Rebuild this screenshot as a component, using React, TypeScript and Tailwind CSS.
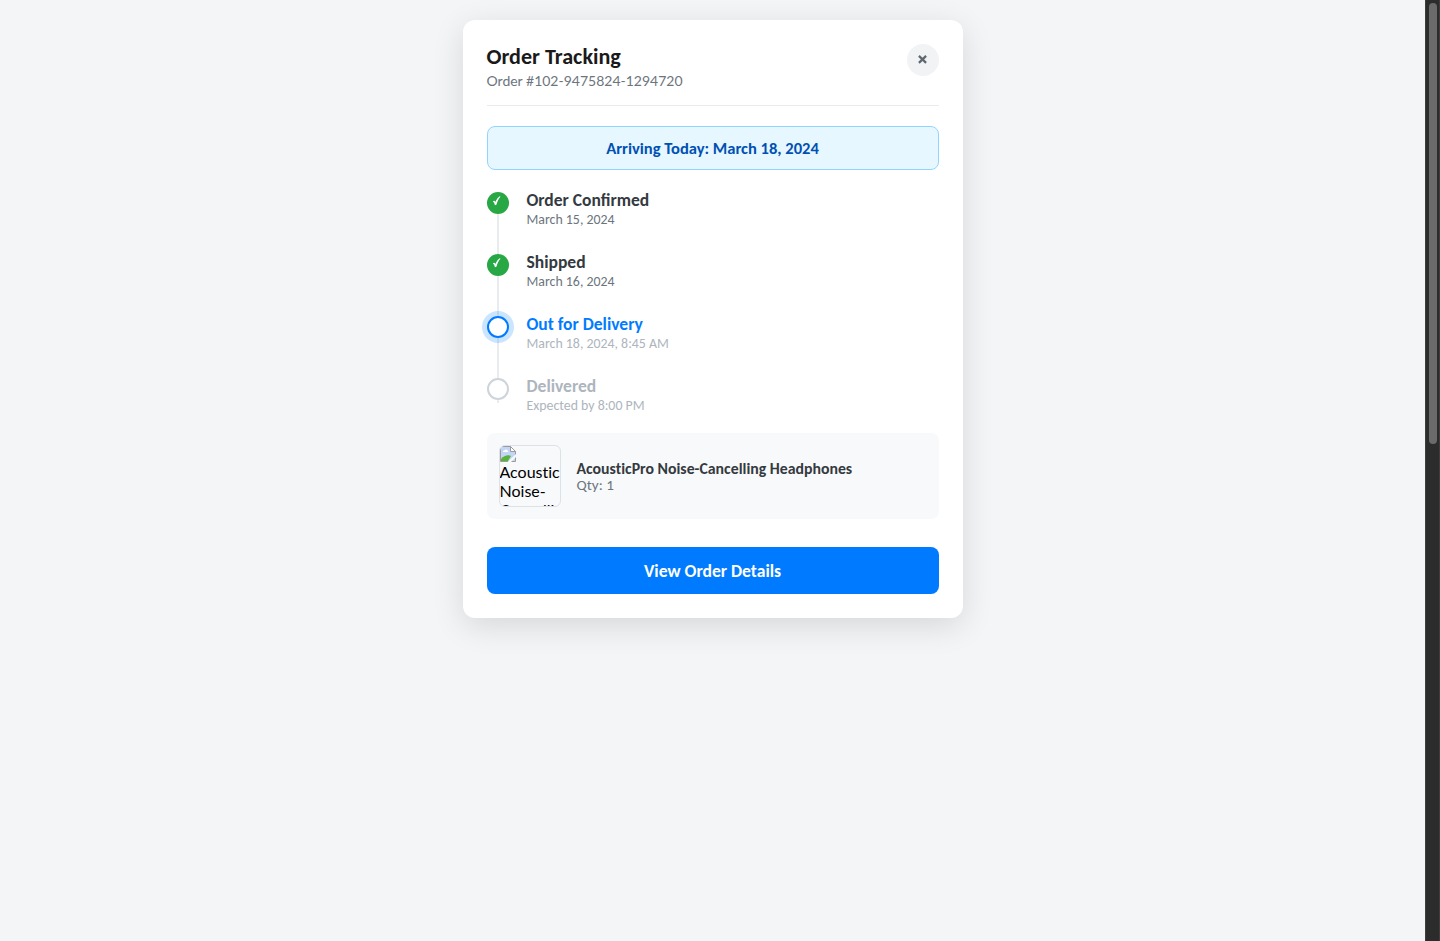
type Status = 'done' | 'current' | 'pending';

const steps: { title: string; date: string; status: Status }[] = [
  { title: 'Order Confirmed', date: 'March 15, 2024', status: 'done' },
  { title: 'Shipped', date: 'March 16, 2024', status: 'done' },
  { title: 'Out for Delivery', date: 'March 18, 2024, 8:45 AM', status: 'current' },
  { title: 'Delivered', date: 'Expected by 8:00 PM', status: 'pending' },
];

const dot: Record<Status, string> = {
  done: 'bg-[#28a745] text-white',
  current: 'border-2 border-[#007bff] bg-white shadow-[0_0_0_5px_rgba(0,123,255,0.2)]',
  pending: 'border-2 border-[#ced4da] bg-white',
};
const titleColor: Record<Status, string> = {
  done: 'text-[#343a40]',
  current: 'text-[#007bff]',
  pending: 'text-[#adb5bd]',
};
const dateColor: Record<Status, string> = {
  done: 'text-[#6c757d]',
  current: 'text-[#adb5bd]',
  pending: 'text-[#adb5bd]',
};

function Check() {
  return (
    <svg className="block" width="22" height="22" viewBox="0 0 22 22">
      <path d="M6 9.300C7 8.300 7.800 8.400 8.300 10C9.500 7.500 11 5.300 12.800 4.200L13.500 4.700C11.700 6.600 10.200 9.600 9.400 12.700L7.900 13.300C7.500 11.300 7 10.100 6 9.800Z" fill="#fff" />
    </svg>
  );
}

function Timeline() {
  return (
    <div className="relative mt-[22px] h-[219px]">
      <div className="absolute top-2 left-[10px] h-[203px] w-[2px] bg-[#e9ecef]" />
      {steps.map((s) => (
        <div key={s.title} className="relative flex h-[62px]">
          <div className={`h-[22px] w-[22px] shrink-0 rounded-full ${dot[s.status]}`}>{s.status === 'done' && <Check />}</div>
          <div className="-mt-[2px] ml-[18px]">
            <div className={`text-[17.550px] leading-[20px] font-bold ${titleColor[s.status]}`}>{s.title}</div>
            <div className={`mt-px text-[13.850px] leading-[17px] ${dateColor[s.status]}`}>{s.date}</div>
          </div>
        </div>
      ))}
    </div>
  );
}

function MissingPicture() {
  return (
    <svg className="block" width="16" height="16" viewBox="0 0 16 16">
      <path d="M0.5 0.5H10.500L15.500 5.500V15.500H0.500Z" fill="#c3d5f7" stroke="#9b9b9b" />
      <path d="M10.500 0.500V5.500H15.500Z" fill="#fff" stroke="#9b9b9b" />
      <path d="M3 6C3 4.800 4 4.500 4.500 4.600C5 3 7.500 3.200 7.600 5C8.500 5 8.500 6 8 6Z" fill="#fff" />
      <path d="M1 15V13C4 9.500 8 8.500 11 10L8 15Z" fill="#58b33b" />
      <path d="M7.500 16L16 8V11L11 16Z" fill="#f8f9fa" />
    </svg>
  );
}

export default function App() {
  return (
    <div className="flex h-[941px] overflow-hidden bg-[#f3f5f7] font-['Carlito','Lato',sans-serif]">
      <main className="flex flex-1 items-start justify-center pt-5">
        <section className="h-[598px] w-[500px] rounded-[12px] bg-white p-6 shadow-[0_8px_32px_rgba(0,0,0,0.12)]">
          <header className="flex h-[62px] items-start justify-between border-b border-[#e9ecef]">
            <div>
              <h1 className="text-[22.150px] leading-[25px] font-bold text-[#1a1a1a]">Order Tracking</h1>
              <p className="mt-[3px] font-['Lato',sans-serif] text-[14px] leading-[18px] text-[#6c757d]">Order #102-9475824-1294720</p>
            </div>
            <button aria-label="Close" className="flex h-8 w-8 justify-center rounded-full bg-[#f1f3f5] pt-[11px] text-[#5f6870]">
              <svg width="9" height="9" viewBox="0 0 9 9" fill="none" stroke="currentColor" strokeWidth="2.2">
                <path d="M0.900 0.900L8.100 7.900M8.100 0.900L0.900 7.900" />
              </svg>
            </button>
          </header>
          <div className="mt-5 flex h-11 items-center justify-center rounded-[8px] border border-[#91d5ff] bg-[#e6f7ff] text-[16.550px] font-bold text-[#0050b3]">
            Arriving Today: March 18, 2024
          </div>
          <Timeline />
          <div className="mt-[22px] flex h-[86px] items-center rounded-[8px] bg-[#f8f9fa] p-3 [font-variant-ligatures:none]">
            <div className="h-[62px] w-[62px] shrink-0 overflow-hidden rounded-[6px] border border-[#dee2e6] font-['Lato',sans-serif] text-[16px] leading-[19px] text-black">
              <MissingPicture />
              <div>
                Acoustic
                <br />
                Noise-
                <br />
                Cancelling
              </div>
            </div>
            <div className="ml-4">
              <div className="text-[15.800px] leading-[17px] font-bold text-[#343a40]">AcousticPro Noise-Cancelling Headphones</div>
              <div className="text-[15.200px] leading-[16px] text-[#6c757d]">Qty: 1</div>
            </div>
          </div>
          <button className="mt-7 h-[47px] w-full rounded-[8px] bg-[#007bff] pt-[2px] text-[17.600px] font-bold text-white">View Order Details</button>
        </section>
      </main>
      <aside className="w-[15px] shrink-0 border-x border-[#3d3d3d] bg-[#2c2c2c] px-[3px] pt-[3px]">
        <div className="h-[441px] w-[8px] rounded-full bg-[#6b6b6b]" />
      </aside>
    </div>
  );
}
